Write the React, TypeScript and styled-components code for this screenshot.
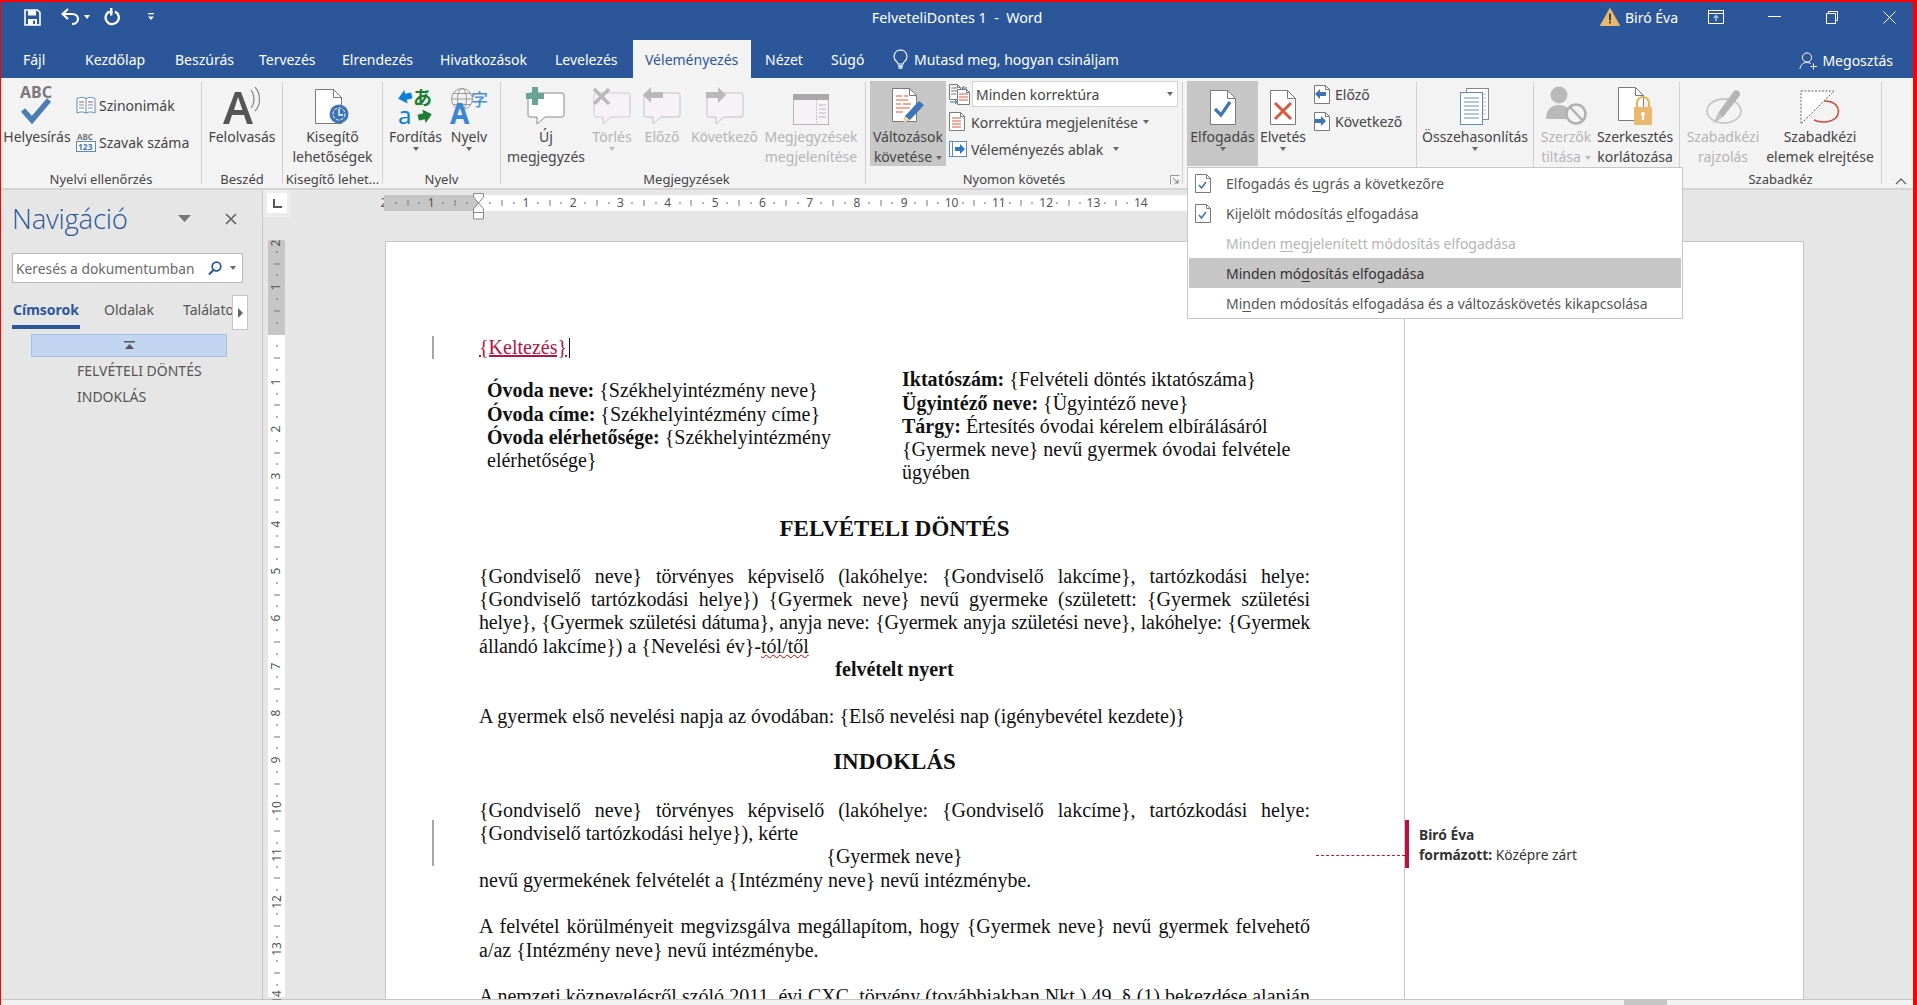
import React from "react";
import styled, { createGlobalStyle } from "styled-components";

const Global = createGlobalStyle`
  html, body { margin: 0; padding: 0; overflow: hidden; background: #e6e6e6; }
  * { box-sizing: border-box; }
`;
const UI = `"Noto Sans", "Open Sans", sans-serif`;
const BLUE = "#2b579a";

const Frame = styled.div`
  width: 1917px; height: 1005px; display: flex; flex-direction: column;
  border-style: solid; border-color: #f00; border-width: 2px 4px 0 1px;
  font-family: ${UI}; font-size: 14px; color: #444; position: relative; overflow: hidden;
`;
const TitleBar = styled.div`
  height: 38px; background: ${BLUE}; color: #fff; display: grid; padding-bottom: 8px;
  grid-template-columns: 1fr auto 1fr; align-items: center;
`;
const QuickAccess = styled.div`display: flex; align-items: center; padding-left: 23px;`;
const WindowTitle = styled.div`font-size: 14.3px; white-space: pre;`;
const WindowControls = styled.div`display: flex; align-items: center; justify-content: flex-end; padding-right: 17px;`;
const UserName = styled.span`margin: 0 30px 0 5px; font-size: 14px;`;
const TabRow = styled.div`
  height: 38px; background: ${BLUE}; color: #fff; display: flex; align-items: center; padding-left: 10px;
`;
const Tab = styled.div<{ $w: number; $pl?: number; $active?: boolean }>`
  width: ${p => p.$w}px; padding-left: ${p => p.$pl ?? 12}px; height: 100%; display: flex; align-items: center;
  padding-top: 1px; white-space: nowrap;
  background: ${p => (p.$active ? "#f3f3f3" : "transparent")};
  color: ${p => (p.$active ? BLUE : "#fff")};
`;
const TellMe = styled.div`display: flex; align-items: center; gap: 6px; padding-top: 1px;`;
const Share = styled.div`margin-left: auto; padding: 3px 20px 0 0; display: flex; align-items: center; gap: 4px;`;

const Ribbon = styled.div`
  height: 112px; background: #f3f3f3; border-bottom: 2px solid #d4d4d4; display: flex; align-items: flex-start;
  padding-top: 4px; color: #444;
`;
const Group = styled.div<{ $w: number; $pl?: number }>`
  width: ${p => p.$w}px; height: 102px; border-right: 1px solid #d0d0d0; display: flex; flex-direction: column;
  position: relative; padding-left: ${p => p.$pl ?? 0}px; flex: none;
`;
const GroupBody = styled.div`height: 88px; display: flex; align-items: flex-start;`;
const GroupLabel = styled.div<{ $pr?: number }>`
  height: 14px; line-height: 18px; font-size: 13px; text-align: center; white-space: nowrap; padding-right: ${p => p.$pr ?? 0}px;
`;
const BigBtn = styled.div<{ $w?: number; $off?: boolean; $on?: boolean }>`
  width: ${p => (p.$w ? `${p.$w}px` : "100%")}; height: 85px; margin-top: -1px; flex: none; display: flex; flex-direction: column;
  align-items: center; text-align: center; white-space: nowrap; line-height: 20px;
  color: ${p => (p.$off ? "#b4b4b4" : "#444")};
  background: ${p => (p.$on ? "#c6c6c6" : "transparent")};
`;
const IconSlot = styled.div`height: 46px; display: flex; align-items: flex-end; justify-content: center; flex: none; padding-bottom: 2px;`;
const Caret = styled.span<{ $off?: boolean; $gap?: number; $light?: boolean }>`
  display: inline-block; width: 0; height: 0; border-left: 3.5px solid transparent; border-right: 3.5px solid transparent;
  border-top: 4px solid ${p => (p.$light ? "#fff" : p.$off ? "#bbb" : "#666")}; margin-left: ${p => p.$gap ?? 0}px; vertical-align: middle;
`;
const SmallCol = styled.div<{ $ml: number; $pt: number; $gap: number }>`
  display: flex; flex-direction: column; margin: -1px 0 0 ${p => p.$ml}px; padding-top: ${p => p.$pt}px; gap: ${p => p.$gap}px;
`;
const SmallRow = styled.div<{ $h?: number; $gap?: number; $mt?: number }>`
  display: flex; align-items: center; gap: ${p => p.$gap ?? 3}px; height: ${p => p.$h ?? 20}px; margin-top: ${p => p.$mt ?? 0}px; white-space: nowrap;
`;
const Combo = styled.div`
  width: 206px; height: 26px; background: #fff; border: 1px solid #d2d2d2; display: flex; align-items: center;
  justify-content: space-between; padding: 0 4px 0 3px;
`;
const Launcher = styled.div`position: absolute; right: 2px; bottom: -1px; line-height: 0;`;
const Collapse = styled.div`margin: 96px 0 0 13px; line-height: 0;`;
const Gap = styled.span<{ $w: number }>`width: ${p => p.$w}px; flex: none;`;

const Main = styled.div`flex: 1; display: flex; min-height: 0; background: #e6e6e6;`;
const Nav = styled.div`
  width: 262px; flex: none; border-right: 1px solid #c6c6c6; display: flex; flex-direction: column; padding-left: 11px;
`;
const NavHead = styled.div`height: 63px; padding-right: 25px; display: flex; align-items: center; justify-content: space-between;`;
const NavTitle = styled.div`font-family: "Open Sans", sans-serif; font-weight: 300; font-size: 27.5px; color: ${BLUE}; letter-spacing: -0.2px; flex: 1; line-height: 34px; padding-bottom: 6px;`;
const NavTools = styled.div`display: flex; align-items: center; gap: 34px; padding-bottom: 6px;`;
const Search = styled.div`
  width: 231px; height: 30px; background: #fff; border: 1px solid #b8b8b8; display: flex; align-items: center;
  padding: 0 6px 0 3px; color: #6a6a6a; justify-content: space-between; font-size: 13.8px; white-space: nowrap;
`;
const SearchTools = styled.div`display: flex; align-items: center; gap: 8px;`;
const NavTabs = styled.div`height: 47px; display: flex; align-items: center; position: relative; width: 236px; padding-top: 10px;`;
const NavTab = styled.div<{ $active?: boolean; $w: number }>`
  width: ${p => p.$w}px; flex: none; overflow: hidden; white-space: nowrap; color: ${p => (p.$active ? BLUE : "#555")};
  font-weight: ${p => (p.$active ? 700 : 400)}; height: 35px; line-height: 32px; padding-left: ${p => (p.$active ? 1 : 0)}px;
  border-bottom: ${p => (p.$active ? `4px solid ${BLUE}` : "4px solid transparent")};
`;
const NavTabMore = styled.div`
  position: absolute; right: 0; bottom: 0; width: 16px; height: 35px; background: #fff; border: 1px solid #c6c6c6;
  display: flex; align-items: center; justify-content: center;
`;
const RightTri = styled.span`width: 0; height: 0; border-top: 5px solid transparent; border-bottom: 5px solid transparent; border-left: 5px solid #666;`;
const HeadingTop = styled.div`
  margin: 4px 0 0 19px; width: 196px; height: 23px; background: #c2d5f1; border: 1px solid #a3bfe6;
  display: flex; align-items: center; justify-content: center;
`;
const HeadingItem = styled.div<{ $mt?: number }>`margin: ${p => p.$mt ?? 0}px 0 0 65px; height: 26px; line-height: 26px; color: #555;`;

const DocArea = styled.div`flex: 1; min-width: 0; display: flex; flex-direction: column;`;
const RulerRow = styled.div`height: 51px; display: flex; flex: none; position: relative;`;
const Corner = styled.div`
  width: 28px; height: 27px; background: #ececec; padding: 3px 4px 4px; flex: none;
`;
const CornerInner = styled.div`width: 20px; height: 20px; background: #fff; display: flex; align-items: center; justify-content: center;`;
const HRuler = styled.div`margin: 5px 0 0 93px; height: 16px; width: 926px; display: flex; font-size: 12px; color: #555;`;
const HInch = styled.div<{ $grey?: boolean }>`
  width: 47.3px; height: 100%; flex: none; background: ${p => (p.$grey ? "#c6c6c6" : "#fff")};
  display: grid; grid-template-columns: repeat(4, 1fr); justify-items: end; align-items: center;
`;
const HMark = styled.span`transform: translateX(50%); line-height: 16px; white-space: nowrap;`;
const ZeroH = styled.div`width: 0; height: 100%; display: flex; justify-content: center; align-items: center; flex: none; line-height: 16px;`;
const HDot = styled.span`display: block; width: 1px; height: 2px; background: #666;`;
const HDash = styled.span`display: block; width: 1px; height: 6px; background: #777;`;
const Marker = styled.div`position: absolute; left: 210px; top: 3px; line-height: 0;`;

const DocRow = styled.div`flex: 1; min-height: 0; display: flex; align-items: stretch;`;
const VCol = styled.div`width: 28px; flex: none; padding-left: 5px; margin-top: -1px;`;
const VRuler = styled.div`width: 17px; display: flex; flex-direction: column; font-size: 12px; color: #555; height: 760px; overflow: hidden;`;
const VInch = styled.div<{ $grey?: boolean }>`
  height: 47.3px; width: 100%; flex: none; background: ${p => (p.$grey ? "#c6c6c6" : "#fff")};
  display: grid; grid-template-rows: repeat(4, 1fr); justify-items: center; align-items: end;
`;
const VMark = styled.span`transform: translateY(50%) rotate(-90deg); line-height: 12px; white-space: nowrap; display: block;`;
const VTop = styled.span`display: block; height: 0; transform: translateY(3px) rotate(-90deg); line-height: 0; white-space: nowrap;`;
const ZeroV = styled.div`height: 0; width: 100%; display: flex; justify-content: center; flex: none; position: relative; z-index: 1;`;
const VDot = styled.span`display: block; width: 2px; height: 1px; background: #666; transform: translateY(50%);`;
const VDash = styled.span`display: block; width: 6px; height: 1px; background: #777; transform: translateY(50%);`;

const Page = styled.div`
  margin-left: 94px; width: 1419px; flex: none; background: #fff; border: 1px solid #c6c6c6; border-bottom: 0;
  display: flex; position: relative; overflow: hidden;
`;
const Body = styled.div`
  width: 1019px; flex: none; border-right: 1px solid #c6c6c6; padding: 94px 94px 0 93px;
  font-family: "Liberation Serif", serif; font-size: 20px; line-height: 23.3px; color: #111;
`;
const Line = styled.div<{ $j?: boolean; $c?: boolean; $tight?: boolean }>`
  white-space: ${p => (p.$j ? "normal" : "nowrap")};
  text-align: ${p => (p.$c ? "center" : "left")};
  text-align-last: ${p => (p.$j ? "justify" : p.$c ? "center" : "left")};
  letter-spacing: ${p => (p.$tight ? "-0.2px" : "normal")};
`;
const Para = styled.div<{ $mt?: number }>`margin-top: ${p => p.$mt ?? 23.3}px;`;
const Tracked = styled.span`color: #b8123f; text-decoration: underline;`;
const Cursor = styled.span`display: inline-block; width: 1px; height: 20px; background: #111; vertical-align: -4px; margin-left: 2px;`;
const Columns = styled.div`display: flex; margin-top: 9px;`;
const LeftCol = styled.div`width: 415px; margin-left: 8px; padding-top: 11px; flex: none;`;
const RightCol = styled.div`flex: 1;`;
const DocTitle = styled.div<{ $mt: number }>`
  margin-top: ${p => p.$mt}px; height: 27px; line-height: 27px; text-align: center; font-weight: 700; font-size: 23px;
`;
const Squiggle = styled.span`text-decoration: underline wavy #c00; text-decoration-thickness: 1px;`;
const ChangeBar = styled.div<{ $top: number; $h: number }>`
  position: absolute; left: 46px; top: ${p => p.$top}px; width: 2px; height: ${p => p.$h}px; background: #a6a6a6;
`;
const Connector = styled.div`position: absolute; left: 930px; top: 613px; width: 89px; border-top: 1px dashed #b8123f;`;
const Markup = styled.div`flex: 1; padding-top: 578px; font-size: 13.8px; line-height: 20px; color: #333;`;
const Balloon = styled.div`border-left: 4px solid #b8123f; height: 48px; padding: 5px 0 0 10px; white-space: nowrap;`;

const Status = styled.div`height: 6px; background: #f1f1f1; border-top: 1px solid #c6c6c6; flex: none; padding-left: 1623px;`;
const Thumb = styled.div`width: 43px; height: 5px; background: #c6c6c6;`;

const Menu = styled.div`
  position: absolute; left: 1186px; top: 165px; width: 496px; height: 152px; background: #fff; border: 1px solid #c6c6c6;
  padding: 0 1px; display: flex; flex-direction: column;
`;
const MenuItem = styled.div<{ $off?: boolean; $hover?: boolean }>`
  height: 30px; flex: none; display: flex; align-items: center; white-space: nowrap; font-size: 14px;
  background: ${p => (p.$hover ? "#c6c6c6" : "transparent")};
  color: ${p => (p.$off ? "#b4b4b4" : p.$hover ? "#333" : "#555")};
  & u { text-underline-offset: 2px; }
`;
const MenuIcon = styled.div`width: 37px; flex: none; padding-left: 6px; line-height: 0;`;
const TextIcon = styled.svg`overflow: visible;`;

/* ---------- icons ---------- */
const Sheet = ({ x = 0.5, y = 0.5, w, h, f = 7, stroke = "#7a7a7a" }: { x?: number; y?: number; w: number; h: number; f?: number; stroke?: string }) => (
  <>
    <path d={`M${x} ${y}h${w - f}l${f} ${f}v${h - f}h${-w}z`} fill="#fff" stroke={stroke} />
    <path d={`M${x + w - f} ${y}v${f}h${f}`} fill="none" stroke={stroke} />
  </>
);
const IconSave = () => (
  <svg width="17" height="17" viewBox="0 0 17 17"><path d="M1 1h12.5L16 3.5V16H1z" fill="none" stroke="#fff" strokeWidth="1.6" /><rect x="4" y="1.5" width="8" height="5" fill="#fff" /><path d="M4 16v-6h9v6" fill="#fff" /><rect x="9" y="11.5" width="2" height="3.5" fill={BLUE} /></svg>
);
const IconUndo = () => (
  <svg width="19" height="18" viewBox="0 0 19 18"><path d="M7 1 1.5 6 7 11" fill="none" stroke="#fff" strokeWidth="2.2" /><path d="M2 6h9c4 0 6 2.500 6 5s-2 5-6 5" fill="none" stroke="#fff" strokeWidth="2.2" /></svg>
);
const IconRepeat = () => (
  <svg width="17" height="18" viewBox="0 0 17 18"><path d="M11 3.600a6.600 6.600 0 1 1-6 .2" fill="none" stroke="#fff" strokeWidth="2.300" /><path d="M6 0v7.500h2.400V0z" fill="#fff" /><path d="M3.500 3h5v2.200h-5z" fill="#fff" /></svg>
);
const IconCustomize = () => (
  <svg width="6" height="8" viewBox="0 0 6 8"><rect width="6" height="1.300" fill="#fff" /><path d="M0 3.500h6L3 7z" fill="#fff" /></svg>
);
const IconWarn = () => (
  <svg width="20" height="18" viewBox="0 0 20 18"><path d="M10 0.500 19.500 17.500H.5z" fill="#e8b96f" stroke="#e8b96f" strokeLinejoin="round" /><rect x="9" y="5.500" width="2" height="7" fill="#444" /><rect x="9" y="13.500" width="2" height="2" fill="#444" /></svg>
);
const IconRibbonOpts = () => (
  <svg width="16" height="14" viewBox="0 0 16 14"><rect x=".5" y=".5" width="15" height="13" fill="none" stroke="#fff" /><path d="M.5 3.500h15" stroke="#fff" /><path d="M8 11V5.500M5.500 8 8 5.500 10.500 8" fill="none" stroke="#fff" /></svg>
);
const IconMin = () => <svg width="13" height="2" viewBox="0 0 13 2"><rect width="13" height="1" fill="#fff" /></svg>;
const IconRestore = () => (
  <svg width="12" height="13" viewBox="0 0 12 13"><rect x=".5" y="2.500" width="9" height="10" fill="none" stroke="#fff" /><path d="M2.500 2.500v-2h9v9h-2" fill="none" stroke="#fff" /></svg>
);
const IconClose = () => <svg width="13" height="13" viewBox="0 0 13 13"><path d="M.5.5l12 12M12.500.5l-12 12" stroke="#fff" /></svg>;
const IconBulb = () => (
  <svg width="15" height="21" viewBox="0 0 15 21"><path d="M7.500 1a6.500 6.500 0 0 0-3.800 11.700c.8.7 1 1.500 1 2.300h5.600c0-.8.2-1.600 1-2.300A6.500 6.500 0 0 0 7.500 1z" fill="none" stroke="#fff" strokeWidth="1.100" /><path d="M5 17h5M5.500 19h4" stroke="#fff" strokeWidth="1.300" /></svg>
);
const IconPerson = () => (
  <svg width="19" height="18" viewBox="0 0 19 18"><circle cx="8" cy="5.500" r="4.600" fill="none" stroke="#fff" /><path d="M1 17c.5-4 3-6.500 7-6.500 1.500 0 2.800.4 3.800 1" fill="none" stroke="#fff" /><path d="M14.500 11.500v6M11.500 14.500h6.500" stroke="#fff" /></svg>
);
const IconSpell = () => (
  <TextIcon width="34" height="40" viewBox="0 0 34 40"><text x="0" y="13" fontFamily="Noto Sans, sans-serif" fontWeight="700" fontSize="16" fill="#7a7a7a">ABC</text><path d="M3 25l9 10L29 15" fill="none" stroke="#4a7db3" strokeWidth="5.500" /></TextIcon>
);
const IconBook = () => (
  <svg width="20" height="18" viewBox="0 0 20 18"><path d="M1 2.500c3-1.500 6-1.500 9 0 3-1.500 6-1.500 9 0V17c-3-1.500-6-1.500-9 0-3-1.500-6-1.500-9 0z" fill="#fff" stroke="#5b8cc0" /><path d="M10 2.500V17" stroke="#5b8cc0" /><path d="M3 6h5M12 6h5" stroke="#d0463a" /><path d="M3 9h5M12 9h5M3 12h5M12 12h5" stroke="#8a8a8a" /></svg>
);
const IconAbc123 = () => (
  <TextIcon width="20" height="20" viewBox="0 0 20 20"><text x="1" y="8" fontFamily="Noto Sans, sans-serif" fontWeight="700" fontSize="8" fill="#777">ABC</text><rect x=".5" y="9.500" width="19" height="10" fill="#fff" stroke="#5b8cc0" /><text x="2" y="18" fontFamily="Noto Sans, sans-serif" fontSize="8.500" fontWeight="700" fill="#3f79b5">123</text></TextIcon>
);
const IconRead = () => (
  <svg width="38" height="38" viewBox="0 0 38 38"><path d="M0 37 12 5h6l12 32h-6l-3-9H9l-3 9zM11 23h8.500L15 10z" fill="#555" fillRule="evenodd" /><path d="M28 3c4 5 4 13 0 18M32 0c6 7 6 18 0 24" fill="none" stroke="#888" strokeWidth="1.200" /></svg>
);
const IconAccess = () => (
  <svg width="36" height="36" viewBox="0 0 36 36"><Sheet w={26} h={34} f={8} /><circle cx="24" cy="25" r="9.500" fill="#3e75b4" /><circle cx="24" cy="25" r="6" fill="none" stroke="#fff" strokeWidth="1" strokeDasharray="3 1.500" /><path d="M24 20v6l4 0" stroke="#fff" fill="none" strokeWidth="1.300" /></svg>
);
const IconTranslate = () => (
  <TextIcon width="36" height="38" viewBox="0 0 36 38">
    <path d="M0 10 8 3v4h6v6H8v4z" fill="#0d7fd6" transform="rotate(-14 7 10)" />
    <text x="15" y="18" fontFamily="Noto Sans CJK JP, sans-serif" fontSize="19" fontWeight="700" fill="#1d7d34">あ</text>
    <text x="0" y="37" fontFamily="Noto Sans, sans-serif" fontSize="24" fill="#0d7fd6">a</text>
    <path d="M34 29l-8 7v-4h-6v-6h6v-4z" fill="#1d7d34" transform="rotate(-14 27 29)" />
  </TextIcon>
);
const IconLang = () => (
  <TextIcon width="38" height="38" viewBox="0 0 38 38">
    <circle cx="12" cy="12" r="10.500" fill="none" stroke="#999" /><ellipse cx="12" cy="12" rx="4.500" ry="10.500" fill="none" stroke="#999" /><path d="M1.500 12h21M3 6.500h18M3 17.500h18" stroke="#999" />
    <text x="21" y="19" fontFamily="Noto Sans CJK SC, sans-serif" fontSize="17" fontWeight="500" fill="#4a8fd4">字</text>
    <text x="0" y="37" fontFamily="Noto Sans, sans-serif" fontWeight="700" fontSize="28" fill="#3a86d0">A</text>
  </TextIcon>
);
const Bubble = ({ stroke = "#8a8a8a", fill = "#fff", x = 2, y = 6, w = 36, h = 24 }: { stroke?: string; fill?: string; x?: number; y?: number; w?: number; h?: number }) => (
  <path d={`M${x + 2} ${y}h${w - 4}q2 0 2 2v${h - 4}q0 2-2 2H${x + 17}l-8 7v-7H${x + 2}q-2 0-2-2V${y + 2}q0-2 2-2z`} fill={fill} stroke={stroke} />
);
const IconNewComment = () => (
  <svg width="40" height="38" viewBox="0 0 40 38"><Bubble /><path d="M6 0h6v6h6v6h-6v6H6v-6H0V6h6z" fill="#68a491" /></svg>
);
const IconDelComment = () => (
  <svg width="40" height="38" viewBox="0 0 40 38"><Bubble stroke="#cfc9cf" fill="#f6f2f6" /><path d="M2 2l15 15M17 2 2 17" stroke="#b9b9b9" strokeWidth="3.500" /></svg>
);
const IconPrevComment = () => (
  <svg width="40" height="38" viewBox="0 0 40 38"><Bubble stroke="#c4c0c4" fill="#f6f2f6" /><path d="M9 0 1 8l8 8v-5h12V5H9z" fill="#b9b9b9" /></svg>
);
const IconNextComment = () => (
  <svg width="40" height="38" viewBox="0 0 40 38"><Bubble stroke="#c4c0c4" fill="#f6f2f6" /><path d="M13 0l8 8-8 8v-5H1V5h12z" fill="#b9b9b9" /></svg>
);
const IconShowComments = () => (
  <svg width="36" height="31" viewBox="0 0 36 31"><rect x=".5" y=".5" width="35" height="30" fill="#f6f2f6" stroke="#b5b5b5" /><rect x="0" y="0" width="36" height="6" fill="#a8a8a8" /><path d="M23.500 6v25" stroke="#c4c4c4" strokeDasharray="2 1" /><path d="M26 11h7M26 15h7M26 19h7M26 23h7" stroke="#bbb" /></svg>
);
const IconTrack = () => (
  <svg width="33" height="37" viewBox="0 0 33 37"><Sheet w={24} h={33} f={7} /><path d="M4 8h6M12 8h4M4 12h12M4 16h5M11 16h8M4 20h14M4 24h7" stroke="#e0573a" strokeWidth="1.200" /><path d="M11 35l2-7L27 13l5 4-14 15z" fill="#3e75b4" /><path d="M11 35l2-7 5 4z" fill="#f3d3a8" /></svg>
);
const IconMarkGroup = () => (
  <svg width="21" height="21" viewBox="0 0 21 21"><Sheet x={0.500} y={0.500} w={11} h={15} f={3} /><Sheet x={8.500} y={5.500} w={12} h={15} f={3} /><path d="M2 4h6M2 7h6M2 10h5" stroke="#777" /><path d="M10 10h9M10 13h9M10 16h9" stroke="#d9583c" /><path d="M13 4h5M15 2l-2 2 2 2M8 18H1M6 16l2 2-2 2" stroke="#3e75b4" fill="none" /></svg>
);
const IconShowMarkup = () => (
  <svg width="17" height="20" viewBox="0 0 17 20"><Sheet w={15} h={18} f={4} /><path d="M3 6h9M3 9h9M3 12h9M3 15h9" stroke="#d9583c" /></svg>
);
const IconPane = () => (
  <svg width="18" height="16" viewBox="0 0 18 16"><rect x=".5" y=".5" width="17" height="15" fill="#fff" stroke="#5b8cc0" /><path d="M3.500 0v16" stroke="#5b8cc0" /><path d="M6 6h5V3l5 5-5 5v-3H6z" fill="#2f76c2" /></svg>
);
const IconAccept = () => (
  <svg width="26" height="35" viewBox="0 0 26 35"><Sheet w={25} h={34} f={8} /><path d="M5 19l6 6L20 12" fill="none" stroke="#3e75b4" strokeWidth="3.200" /></svg>
);
const IconReject = () => (
  <svg width="26" height="35" viewBox="0 0 26 35"><Sheet w={25} h={34} f={8} /><path d="M5 13l16 16M21 13 5 29" stroke="#d9583c" strokeWidth="3" /></svg>
);
const IconSmallPrev = () => (
  <svg width="16" height="19" viewBox="0 0 16 19"><Sheet w={15} h={18} f={4} /><path d="M1 9l5-5v3h6v4H6v3z" fill="#3e75b4" /></svg>
);
const IconSmallNext = () => (
  <svg width="16" height="19" viewBox="0 0 16 19"><Sheet w={15} h={18} f={4} /><path d="M12 9 7 4v3H1v4h6v3z" fill="#3e75b4" /></svg>
);
const IconCompare = () => (
  <svg width="30" height="37" viewBox="0 0 30 37"><rect x="6.500" y=".5" width="22" height="31" fill="#fff" stroke="#8a8a8a" /><path d="M22 6h4M22 10h4M22 14h4M22 18h4M22 22h4M22 26h4" stroke="#bbb" /><rect x=".5" y="4.500" width="22" height="32" fill="#fff" stroke="#5b8cc0" /><path d="M4 10h15M4 14h15M4 18h15M4 22h15M4 26h15M4 30h15" stroke="#9ab8da" strokeWidth="1.300" /></svg>
);
const IconBlock = () => (
  <svg width="41" height="39" viewBox="0 0 41 39"><circle cx="13" cy="9" r="8.500" fill="#b9b9b9" /><path d="M0 33c0-9 5-14 13-14s13 5 13 14z" fill="#b9b9b9" /><circle cx="30" cy="28" r="9.500" fill="#f3f3f3" stroke="#b0b0b0" strokeWidth="2.500" /><path d="M24 21l13 14" stroke="#b0b0b0" strokeWidth="2.500" /></svg>
);
const IconLockDoc = () => (
  <svg width="35" height="38" viewBox="0 0 35 38"><Sheet w={25} h={33} f={8} /><path d="M19 21v-5a6 6 0 0 1 12 0v5" fill="none" stroke="#e3b55f" strokeWidth="2.200" /><rect x="16" y="20" width="18" height="18" rx="1" fill="#e8b96f" /><circle cx="25" cy="27" r="2" fill="#fff" /><rect x="24" y="27" width="2" height="6" fill="#fff" /></svg>
);
const IconInk = () => (
  <svg width="37" height="36" viewBox="0 0 37 36"><ellipse cx="19" cy="22" rx="17" ry="12" fill="none" stroke="#c8c8c8" strokeWidth="1.800" /><path d="M13 24 29 2c1.500-1.300 3.500-1 5 .5 1.300 1.500 1.500 3 .5 4.500L18 28z" fill="#b5b5b5" /><path d="M8 35l5-11 5 4z" fill="#c5c5c5" /></svg>
);
const IconHideInk = () => (
  <svg width="40" height="35" viewBox="0 0 40 35"><path d="M1 1h33L1 34z" fill="#fff" stroke="#666" strokeDasharray="2 1.500" /><path d="M24 11c11 0 16 6 14 13-2 8-16 10-24 6" fill="none" stroke="#cf4a35" strokeWidth="1.500" /></svg>
);
const IconLauncher = () => (
  <svg width="10" height="10" viewBox="0 0 10 10"><path d="M.5 9.500V.5h9" fill="none" stroke="#999" /><path d="M3 3l5 5M8 4.500V8H4.500" fill="none" stroke="#777" /></svg>
);
const IconUp = () => <svg width="12" height="7" viewBox="0 0 12 7"><path d="M1 6l5-5 5 5" fill="none" stroke="#666" strokeWidth="1.300" /></svg>;
const IconNavDown = () => <svg width="13" height="7" viewBox="0 0 13 7"><path d="M0 0h13L6.500 7z" fill="#777" /></svg>;
const IconNavX = () => <svg width="12" height="12" viewBox="0 0 12 12"><path d="M1 1l10 10M11 1 1 11" stroke="#666" strokeWidth="1.700" /></svg>;
const IconMag = () => (
  <svg width="14" height="15" viewBox="0 0 14 15"><circle cx="8.500" cy="5.500" r="4.300" fill="none" stroke="#2b579a" strokeWidth="1.700" /><path d="M5.500 9 1 13.500" stroke="#2b579a" strokeWidth="2.200" /></svg>
);
const IconCollapse = () => <svg width="11" height="9" viewBox="0 0 11 9"><rect width="11" height="1.500" fill="#555" /><path d="M5.500 3 10 8H1z" fill="#555" /></svg>;
const IconTabStop = () => <svg width="9" height="9" viewBox="0 0 9 9"><path d="M1 0v8h8" fill="none" stroke="#555" strokeWidth="2" /></svg>;
const IconMarker = () => (
  <svg width="11" height="27" viewBox="0 0 11 27"><path d="M.5.5h10V4L5.500 10 .5 4zM5.500 10l5 6v10H.5V16zM.5 19.500h10" fill="#fff" stroke="#888" /></svg>
);
const IconMenuDoc = () => (
  <svg width="16" height="19" viewBox="0 0 16 19"><Sheet w={15} h={18} f={4} /><path d="M4 11l2.500 3L11 8" fill="none" stroke="#3e75b4" strokeWidth="1.600" /></svg>
);

/* ---------- ruler data ---------- */
const HRulerMarks = ({ n }: { n?: number }) => (
  <>
    <HMark><HDot /></HMark>
    <HMark><HDash /></HMark>
    <HMark><HDot /></HMark>
    <HMark>{n ?? ""}</HMark>
  </>
);
const VRulerMarks = ({ n }: { n?: number }) => (
  <>
    <VDot />
    <VDash />
    <VDot />
    {n !== undefined ? <VMark>{n}</VMark> : <span />}
  </>
);
const range = (a: number, b: number) => Array.from({ length: b - a + 1 }, (_, i) => a + i);

export default function App() {
  return (
    <Frame>
      <Global />
      <TitleBar>
        <QuickAccess>
          <IconSave />
          <Gap $w={20} />
          <IconUndo />
          <Caret $gap={4} $light />
          <Gap $w={14} />
          <IconRepeat />
          <Gap $w={27} />
          <IconCustomize />
        </QuickAccess>
        <WindowTitle>FelveteliDontes 1  -  Word</WindowTitle>
        <WindowControls>
          <IconWarn />
          <UserName>Biró Éva</UserName>
          <IconRibbonOpts />
          <Gap $w={44} />
          <IconMin />
          <Gap $w={45} />
          <IconRestore />
          <Gap $w={45} />
          <IconClose />
        </WindowControls>
      </TitleBar>
      <TabRow>
        <Tab $w={62}>Fájl</Tab>
        <Tab $w={90}>Kezdőlap</Tab>
        <Tab $w={84}>Beszúrás</Tab>
        <Tab $w={83}>Tervezés</Tab>
        <Tab $w={98}>Elrendezés</Tab>
        <Tab $w={115}>Hivatkozások</Tab>
        <Tab $w={90}>Levelezés</Tab>
        <Tab $w={118} $active>Véleményezés</Tab>
        <Tab $w={68} $pl={14}>Nézet</Tab>
        <Tab $w={74}>Súgó</Tab>
        <TellMe><IconBulb />Mutasd meg, hogyan csináljam</TellMe>
        <Share><IconPerson />Megosztás</Share>
      </TabRow>
      <Ribbon>
        <Group $w={201}>
          <GroupBody>
            <BigBtn $w={72}><IconSlot><IconSpell /></IconSlot>Helyesírás</BigBtn>
            <SmallCol $ml={3} $pt={14} $gap={17}>
              <SmallRow><IconBook />Szinonimák</SmallRow>
              <SmallRow><IconAbc123 />Szavak száma</SmallRow>
            </SmallCol>
          </GroupBody>
          <GroupLabel>Nyelvi ellenőrzés</GroupLabel>
        </Group>
        <Group $w={81}>
          <GroupBody><BigBtn><IconSlot><IconRead /></IconSlot>Felolvasás</BigBtn></GroupBody>
          <GroupLabel>Beszéd</GroupLabel>
        </Group>
        <Group $w={100}>
          <GroupBody><BigBtn><IconSlot><IconAccess /></IconSlot>Kisegítő<br />lehetőségek</BigBtn></GroupBody>
          <GroupLabel>Kisegítő lehet...</GroupLabel>
        </Group>
        <Group $w={118}>
          <GroupBody>
            <BigBtn $w={65}><IconSlot><IconTranslate /></IconSlot>Fordítás<br /><Caret /></BigBtn>
            <BigBtn $w={42}><IconSlot><IconLang /></IconSlot>Nyelv<br /><Caret /></BigBtn>
          </GroupBody>
          <GroupLabel>Nyelv</GroupLabel>
        </Group>
        <Group $w={365} $pl={7}>
          <GroupBody>
            <BigBtn $w={76}><IconSlot><IconNewComment /></IconSlot>Új<br />megjegyzés</BigBtn>
            <BigBtn $w={56} $off><IconSlot><IconDelComment /></IconSlot>Törlés<br /><Caret $off /></BigBtn>
            <BigBtn $w={44} $off><IconSlot><IconPrevComment /></IconSlot>Előző</BigBtn>
            <BigBtn $w={81} $off><IconSlot><IconNextComment /></IconSlot>Következő</BigBtn>
            <BigBtn $w={92} $off><IconSlot><IconShowComments /></IconSlot>Megjegyzések<br />megjelenítése</BigBtn>
          </GroupBody>
          <GroupLabel>Megjegyzések</GroupLabel>
        </Group>
        <Group $w={317} $pl={4}>
          <GroupBody>
            <BigBtn $w={76} $on><IconSlot><IconTrack /></IconSlot>Változások<br /><span>követése<Caret $gap={4} /></span></BigBtn>
            <SmallCol $ml={3} $pt={0} $gap={5}>
              <SmallRow $h={26} $gap={2}><IconMarkGroup /><Combo>Minden korrektúra<Caret /></Combo></SmallRow>
              <SmallRow $gap={5}><IconShowMarkup />Korrektúra megjelenítése<Caret $gap={0} /></SmallRow>
              <SmallRow $gap={4} $mt={2}><IconPane />Véleményezés ablak<Caret $gap={6} /></SmallRow>
            </SmallCol>
          </GroupBody>
          <GroupLabel $pr={24}>Nyomon követés</GroupLabel>
          <Launcher><IconLauncher /></Launcher>
        </Group>
        <Group $w={234} $pl={4}>
          <GroupBody>
            <BigBtn $w={71} $on><IconSlot><IconAccept /></IconSlot>Elfogadás<br /><Caret /></BigBtn>
            <BigBtn $w={50}><IconSlot><IconReject /></IconSlot>Elvetés<br /><Caret /></BigBtn>
            <SmallCol $ml={6} $pt={3} $gap={7}>
              <SmallRow $gap={5}><IconSmallPrev />Előző</SmallRow>
              <SmallRow $gap={5}><IconSmallNext />Következő</SmallRow>
            </SmallCol>
          </GroupBody>
        </Group>
        <Group $w={117}>
          <GroupBody><BigBtn><IconSlot><IconCompare /></IconSlot>Összehasonlítás<br /><Caret /></BigBtn></GroupBody>
        </Group>
        <Group $w={146}>
          <GroupBody>
            <BigBtn $w={64} $off><IconSlot><IconBlock /></IconSlot>Szerzők<br /><span>tiltása<Caret $off $gap={4} /></span></BigBtn>
            <BigBtn $w={74}><IconSlot><IconLockDoc /></IconSlot>Szerkesztés<br />korlátozása</BigBtn>
          </GroupBody>
        </Group>
        <Group $w={202}>
          <GroupBody>
            <BigBtn $w={86} $off><IconSlot><IconInk /></IconSlot>Szabadkézi<br />rajzolás</BigBtn>
            <BigBtn $w={108}><IconSlot><IconHideInk /></IconSlot>Szabadkézi<br />elemek elrejtése</BigBtn>
          </GroupBody>
          <GroupLabel>Szabadkéz</GroupLabel>
        </Group>
        <Collapse><IconUp /></Collapse>
      </Ribbon>
      <Main>
        <Nav>
          <NavHead>
            <NavTitle>Navigáció</NavTitle>
            <NavTools><IconNavDown /><IconNavX /></NavTools>
          </NavHead>
          <Search>Keresés a dokumentumban<SearchTools><IconMag /><Caret /></SearchTools></Search>
          <NavTabs>
            <NavTab $active $w={68}>Címsorok</NavTab>
            <Gap $w={24} />
            <NavTab $w={79}>Oldalak</NavTab>
            <NavTab $w={49}>Találatok</NavTab>
            <NavTabMore><RightTri /></NavTabMore>
          </NavTabs>
          <HeadingTop><IconCollapse /></HeadingTop>
          <HeadingItem $mt={1}>FELVÉTELI DÖNTÉS</HeadingItem>
          <HeadingItem>INDOKLÁS</HeadingItem>
        </Nav>
        <DocArea>
          <RulerRow>
            <Corner><CornerInner><IconTabStop /></CornerInner></Corner>
            <HRuler>
              <ZeroH>2</ZeroH>
              <HInch $grey><HRulerMarks n={1} /></HInch>
              <HInch $grey><HRulerMarks /></HInch>
              {range(1, 14).map(n => <HInch key={n}><HRulerMarks n={n} /></HInch>)}
              {range(15, 18).map(n => <HInch key={n} />)}
            </HRuler>
            <Marker><IconMarker /></Marker>
          </RulerRow>
          <DocRow>
            <VCol>
              <VRuler>
                <ZeroV><VTop>2</VTop></ZeroV>
                <VInch $grey><VRulerMarks n={1} /></VInch>
                <VInch $grey><VRulerMarks /></VInch>
                {range(1, 14).map(n => <VInch key={n}><VRulerMarks n={n} /></VInch>)}
              </VRuler>
            </VCol>
            <Page>
              <Body>
                <Line><Tracked>{"{Keltezés}"}</Tracked><Cursor /></Line>
                <Columns>
                  <LeftCol>
                    <Line><b>Óvoda neve:</b> {"{Székhelyintézmény neve}"}</Line>
                    <Line><b>Óvoda címe:</b> {"{Székhelyintézmény címe}"}</Line>
                    <Line><b>Óvoda elérhetősége:</b> {"{Székhelyintézmény"}</Line>
                    <Line>{"elérhetősége}"}</Line>
                  </LeftCol>
                  <RightCol>
                    <Line><b>Iktatószám:</b> {"{Felvételi döntés iktatószáma}"}</Line>
                    <Line><b>Ügyintéző neve:</b> {"{Ügyintéző neve}"}</Line>
                    <Line><b>Tárgy:</b> Értesítés óvodai kérelem elbírálásáról</Line>
                    <Line>{"{Gyermek neve} nevű gyermek óvodai felvétele"}</Line>
                    <Line>ügyében</Line>
                  </RightCol>
                </Columns>
                <DocTitle $mt={30}>FELVÉTELI DÖNTÉS</DocTitle>
                <Para $mt={23}>
                  <Line $j>{"{Gondviselő neve} törvényes képviselő (lakóhelye: {Gondviselő lakcíme}, tartózkodási helye:"}</Line>
                  <Line $j>{"{Gondviselő tartózkodási helye}) {Gyermek neve} nevű gyermeke (született: {Gyermek születési"}</Line>
                  <Line $j $tight>{"helye}, {Gyermek születési dátuma}, anyja neve: {Gyermek anyja születési neve}, lakóhelye: {Gyermek"}</Line>
                  <Line>{"állandó lakcíme}) a {Nevelési év}-"}<Squiggle>tól/től</Squiggle></Line>
                  <Line $c><b>felvételt nyert</b></Line>
                </Para>
                <Para><Line>{"A gyermek első nevelési napja az óvodában: {Első nevelési nap (igénybevétel kezdete)}"}</Line></Para>
                <DocTitle $mt={20}>INDOKLÁS</DocTitle>
                <Para $mt={24}>
                  <Line $j>{"{Gondviselő neve} törvényes képviselő (lakóhelye: {Gondviselő lakcíme}, tartózkodási helye:"}</Line>
                  <Line>{"{Gondviselő tartózkodási helye}), kérte"}</Line>
                  <Line $c>{"{Gyermek neve}"}</Line>
                  <Line>{"nevű gyermekének felvételét a {Intézmény neve} nevű intézménybe."}</Line>
                </Para>
                <Para>
                  <Line $j>{"A felvétel körülményeit megvizsgálva megállapítom, hogy {Gyermek neve} nevű gyermek felvehető"}</Line>
                  <Line>{"a/az {Intézmény neve} nevű intézménybe."}</Line>
                </Para>
                <Para>
                  <Line $j>A nemzeti köznevelésről szóló 2011. évi CXC. törvény (továbbiakban Nkt.) 49. § (1) bekezdése alapján</Line>
                </Para>
              </Body>
              <Markup>
                <Balloon><b>Biró Éva</b><br /><b>formázott:</b> Középre zárt</Balloon>
              </Markup>
              <ChangeBar $top={94} $h={23} />
              <ChangeBar $top={578} $h={46} />
              <Connector />
            </Page>
          </DocRow>
        </DocArea>
      </Main>
      <Status><Thumb /></Status>
      <Menu>
        <MenuItem><MenuIcon><IconMenuDoc /></MenuIcon><span>Elfogadás és <u>u</u>grás a következőre</span></MenuItem>
        <MenuItem><MenuIcon><IconMenuDoc /></MenuIcon><span>Kijelölt módosítás <u>e</u>lfogadása</span></MenuItem>
        <MenuItem $off><MenuIcon /><span>Minden <u>m</u>egjelenített módosítás elfogadása</span></MenuItem>
        <MenuItem $hover><MenuIcon /><span>Minden mó<u>d</u>osítás elfogadása</span></MenuItem>
        <MenuItem><MenuIcon /><span>Mi<u>n</u>den módosítás elfogadása és a változáskövetés kikapcsolása</span></MenuItem>
      </Menu>
    </Frame>
  );
}
